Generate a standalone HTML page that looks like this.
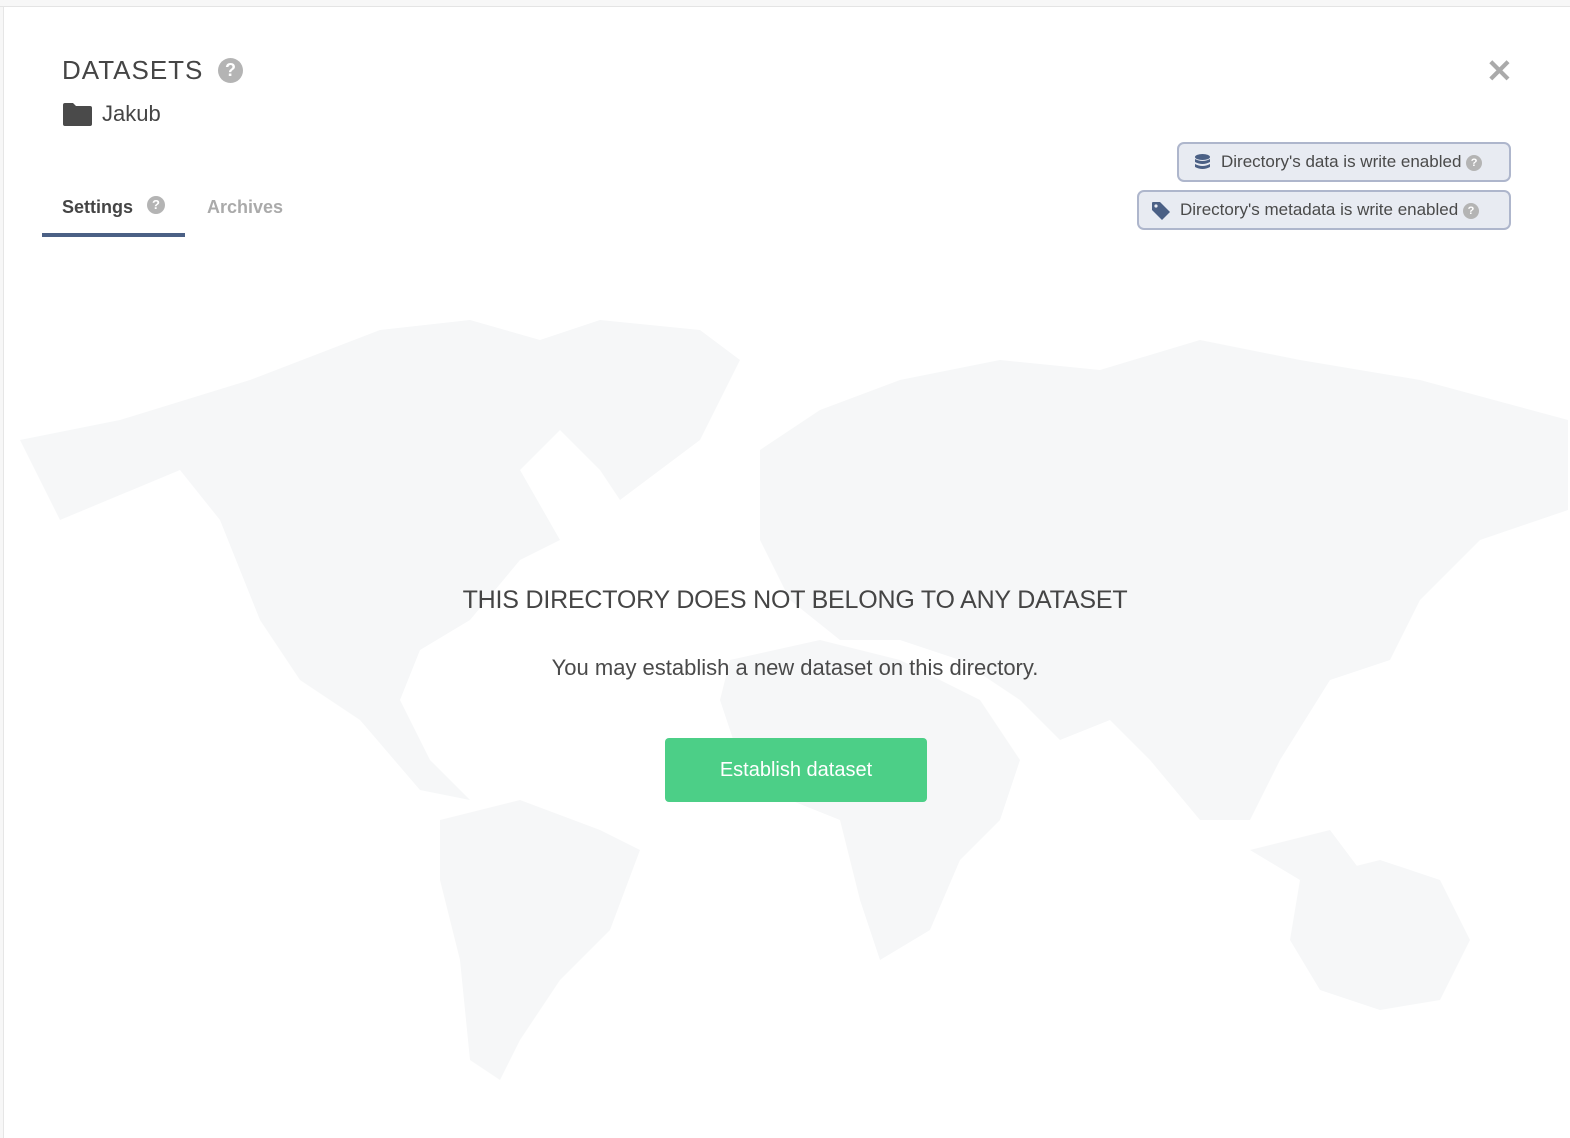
<!DOCTYPE html>
<html><head><meta charset="utf-8"><style>
*{box-sizing:border-box;margin:0;padding:0}
body{width:1570px;height:1138px;background:#fff;font-family:"Liberation Sans",sans-serif;position:relative;overflow:hidden;color:#4a4a4a}
.topline{position:absolute;left:0;top:0;width:1570px;height:7px;background:#f7f7f7;border-bottom:1px solid #e4e4e4}
.leftline{position:absolute;left:0;top:7px;width:4px;height:1131px;background:#f7f7f7;border-right:1px solid #e6e6e6}
.abs{position:absolute}
.q{display:inline-block;border-radius:50%;background:#b4b4b4;color:#fff;text-align:center;font-weight:bold}
.badge{position:absolute;height:40px;border:2px solid #aeb6cc;background:#e8ebf2;border-radius:7px;font-size:17px;color:#4a4a4a;line-height:36px;white-space:nowrap}
</style></head><body>
<svg class="abs" style="left:0;top:0" width="1570" height="1138">
<g fill="#f6f7f8">
<path d="M20 440 L120 420 L250 380 L380 330 L470 320 L540 340 L600 320 L700 330 L740 360 L700 440 L620 500 L600 470 L560 430 L520 470 L560 540 L520 560 L470 620 L420 650 L400 700 L430 760 L470 800 L420 790 L360 720 L330 700 L300 680 L260 620 L220 520 L180 470 L60 520 Z"/>
<path d="M440 820 L520 800 L600 830 L640 850 L610 930 L560 980 L520 1040 L500 1080 L470 1060 L460 960 L440 880 Z"/>
<path d="M760 450 L820 410 L900 380 L1000 360 L1100 370 L1200 340 L1300 360 L1420 380 L1568 420 L1568 510 L1480 540 L1420 600 L1390 660 L1330 680 L1280 760 L1250 820 L1200 820 L1150 760 L1110 720 L1060 740 L1020 700 L960 660 L900 640 L840 640 L790 600 L760 540 Z"/>
<path d="M730 660 L820 640 L900 660 L980 700 L1020 760 L1000 820 L960 860 L930 930 L880 960 L860 900 L840 820 L790 800 L740 760 L720 700 Z"/>
<path d="M1300 880 L1380 860 L1440 880 L1470 940 L1440 1000 L1380 1010 L1320 990 L1290 940 Z"/>
<path d="M1250 850 L1330 830 L1360 870 L1300 880 Z"/>
</g></svg>
<div class="topline"></div><div class="leftline"></div>

<div class="abs" style="left:62px;top:55px;font-size:26px;letter-spacing:1px;color:#454545">DATASETS</div>
<span class="q abs" style="left:218px;top:58px;width:25px;height:25px;font-size:18px;line-height:25px">?</span>
<svg class="abs" style="left:63px;top:103px" width="29" height="23" viewBox="0 0 29 23"><path d="M2 0 H10 L13 3 H27 Q29 3 29 5 V21 Q29 23 27 23 H2 Q0 23 0 21 V2 Q0 0 2 0Z" fill="#4a4a4a"/></svg>
<div class="abs" style="left:102px;top:101px;font-size:22px;color:#454545">Jakub</div>

<div class="abs" style="left:62px;top:197px;font-size:18px;font-weight:bold;color:#454545">Settings</div>
<span class="q abs" style="left:147px;top:196px;width:18px;height:18px;font-size:13px;line-height:18px">?</span>
<div class="abs" style="left:207px;top:197px;font-size:18px;font-weight:bold;color:#aaa">Archives</div>
<div class="abs" style="left:42px;top:233px;width:143px;height:4px;background:#4b6085"></div>

<div class="abs" style="left:1486px;top:57px;font-size:32px;color:#aaa;font-weight:bold;line-height:28px">✕</div>

<div class="badge" style="left:1177px;top:142px;width:334px;padding-left:42px">
<svg class="abs" style="left:16px;top:10px" width="15" height="17" viewBox="0 0 15 17"><ellipse cx="7.5" cy="3" rx="7.5" ry="3" fill="#4b6085"/><path d="M0 5 Q7.5 9 15 5 V8 Q7.5 12 0 8Z M0 10 Q7.5 14 15 10 V13 Q7.5 17 0 13Z" fill="#4b6085"/></svg>
Directory's data is write enabled <span class="q" style="width:16px;height:16px;font-size:11px;line-height:16px;vertical-align:1px">?</span></div>
<div class="badge" style="left:1137px;top:190px;width:374px;padding-left:41px">
<svg class="abs" style="left:13px;top:10px" width="18" height="18" viewBox="0 0 18 18"><path d="M0 1 Q0 0 1 0 H8 L18 10 L10 18 L0 8Z" fill="#4b6085"/><circle cx="4" cy="4" r="1.6" fill="#e8ebf2"/></svg>
Directory's metadata is write enabled <span class="q" style="width:16px;height:16px;font-size:11px;line-height:16px;vertical-align:1px">?</span></div>

<div class="abs" style="left:0;width:1590px;top:586px;text-align:center;font-size:25px;color:#454545;letter-spacing:-0.2px">THIS DIRECTORY DOES NOT BELONG TO ANY DATASET</div>
<div class="abs" style="left:0;width:1590px;top:655px;text-align:center;font-size:22px;color:#4a4a4a">You may establish a new dataset on this directory.</div>
<div class="abs" style="left:665px;top:738px;width:262px;height:64px;background:#4ccf87;border-radius:4px;color:#fff;font-size:20px;text-align:center;line-height:64px">Establish dataset</div>
</body></html>
